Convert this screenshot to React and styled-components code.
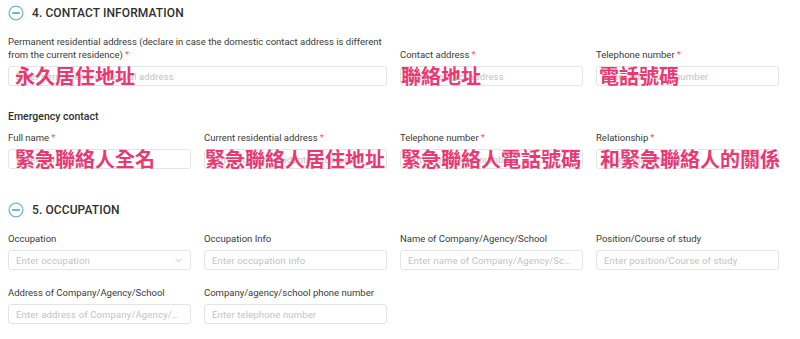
import React from "react";
import styled, { createGlobalStyle } from "styled-components";

const GlobalStyle = createGlobalStyle`
  html, body { margin: 0; padding: 0; background: #ffffff; }
  body { font-family: Roboto, "Liberation Sans", sans-serif; color: #333; }
  * { box-sizing: border-box; }
`;

const Page = styled.div`
  width: 787px;
  padding: 0 8px;
`;

const Section = styled.section`
  display: flex;
  flex-direction: column;
  margin-top: ${(p) => p.$top || 0}px;
`;

const SectionHeader = styled.div`
  height: 25px;
  display: flex;
  align-items: center;
  gap: 8px;
`;

const SectionTitle = styled.h2`
  margin: 0;
  font-size: 12px;
  font-weight: 500;
  color: #2f2f2f;
  letter-spacing: 0.1px;
  text-transform: uppercase;
`;

const FieldGrid = styled.div`
  display: grid;
  grid-template-columns: repeat(4, 1fr);
  column-gap: 13px;
  row-gap: 16px;
  align-items: end;
  margin-top: ${(p) => p.$top || 0}px;
`;

const Field = styled.div`
  display: flex;
  flex-direction: column;
  gap: 5px;
  grid-column: span ${(p) => p.$span || 1};
  min-width: 0;
`;

const Label = styled.label`
  font-size: 9.5px;
  line-height: 13px;
  color: #3a3a3a;
`;

const Required = styled.span`
  color: #ef5b5b;
  margin-left: 2px;
`;

const SubHeading = styled.div`
  margin-top: 24px;
  font-size: 10.5px;
  line-height: 13px;
  font-weight: 500;
  color: #2f2f2f;
`;

const InputBox = styled.div`
  position: relative;
  height: 20px;
  border: 1px solid #e4e4e4;
  border-radius: 3px;
  background: #fff;
  display: flex;
  align-items: center;
  padding: 0 7px;
`;

const TextInput = styled.input`
  flex: 1;
  min-width: 0;
  border: none;
  outline: none;
  padding: 0;
  background: transparent;
  font-family: Roboto, "Liberation Sans", sans-serif;
  font-size: 9.5px;
  letter-spacing: 0.15px;
  color: #333;
  text-overflow: ellipsis;
  &::placeholder {
    color: #c2c2c2;
  }
`;

const Chevron = styled.svg`
  flex: none;
  width: 7px;
  height: 5px;
  margin-right: 1px;
`;

const Annotation = styled.span`
  position: absolute;
  left: ${(p) => p.$dx}px;
  top: 50%;
  transform: translateY(-50%);
  white-space: nowrap;
  pointer-events: none;
  font-family: "Noto Sans CJK TC", "Noto Sans CJK SC", sans-serif;
  font-weight: 700;
  font-size: 20px;
  line-height: 1;
  color: #ea3873;
`;

const ToggleIcon = () => (
  <svg width="16" height="16" viewBox="0 0 16 16" aria-hidden="true">
    <circle cx="8" cy="8" r="6.9" fill="none" stroke="#6bb9c6" strokeWidth="1.3" />
    <line x1="4.6" y1="8" x2="11.4" y2="8" stroke="#4b9fae" strokeWidth="1.3" strokeLinecap="round" />
  </svg>
);

const FormField = ({ label, required, placeholder, span, note, dx = 6, select }) => (
  <Field $span={span}>
    <Label>
      {label}
      {required && <Required>*</Required>}
    </Label>
    <InputBox>
      <TextInput placeholder={placeholder} />
      {select && (
        <Chevron viewBox="0 0 7 5">
          <polyline points="0.5,0.8 3.5,3.8 6.5,0.8" fill="none" stroke="#bdbdbd" strokeWidth="0.9" />
        </Chevron>
      )}
      {note && <Annotation $dx={dx}>{note}</Annotation>}
    </InputBox>
  </Field>
);

export default function App() {
  return (
    <Page>
      <GlobalStyle />
      <Section>
        <SectionHeader>
          <ToggleIcon />
          <SectionTitle>4. Contact information</SectionTitle>
        </SectionHeader>
        <FieldGrid $top={10}>
          <FormField
            span={2}
            label={
              <>
                Permanent residential address (declare in case the domestic contact address is different
                <br />
                from the current residence)
              </>
            }
            required
            placeholder="Enter permanent residential address"
            note="永久居住地址"
            dx={6}
          />
          <FormField label="Contact address" required placeholder="Enter contact address" note="聯絡地址" dx={0} />
          <FormField label="Telephone number" required placeholder="Enter telephone number" note="電話號碼" dx={2} />
        </FieldGrid>
        <SubHeading>Emergency contact</SubHeading>
        <FieldGrid $top={8}>
          <FormField label="Full name" required placeholder="Enter full name" note="緊急聯絡人全名" dx={6} />
          <FormField
            label="Current residential address"
            required
            placeholder="Enter current residential address"
            note="緊急聯絡人居住地址"
            dx={0}
          />
          <FormField label="Telephone number" required placeholder="Enter telephone number" note="緊急聯絡人電話號碼" dx={0} />
          <FormField label="Relationship" required placeholder="Enter relationship" note="和緊急聯絡人的關係" dx={3} />
        </FieldGrid>
      </Section>
      <Section $top={28}>
        <SectionHeader>
          <ToggleIcon />
          <SectionTitle>5. Occupation</SectionTitle>
        </SectionHeader>
        <FieldGrid $top={10}>
          <FormField label="Occupation" placeholder="Enter occupation" select />
          <FormField label="Occupation Info" placeholder="Enter occupation info" />
          <FormField label="Name of Company/Agency/School" placeholder="Enter name of Company/Agency/School" />
          <FormField label="Position/Course of study" placeholder="Enter position/Course of study" />
          <FormField label="Address of Company/Agency/School" placeholder="Enter address of Company/Agency/School" />
          <FormField label="Company/agency/school phone number" placeholder="Enter telephone number" />
        </FieldGrid>
      </Section>
    </Page>
  );
}
